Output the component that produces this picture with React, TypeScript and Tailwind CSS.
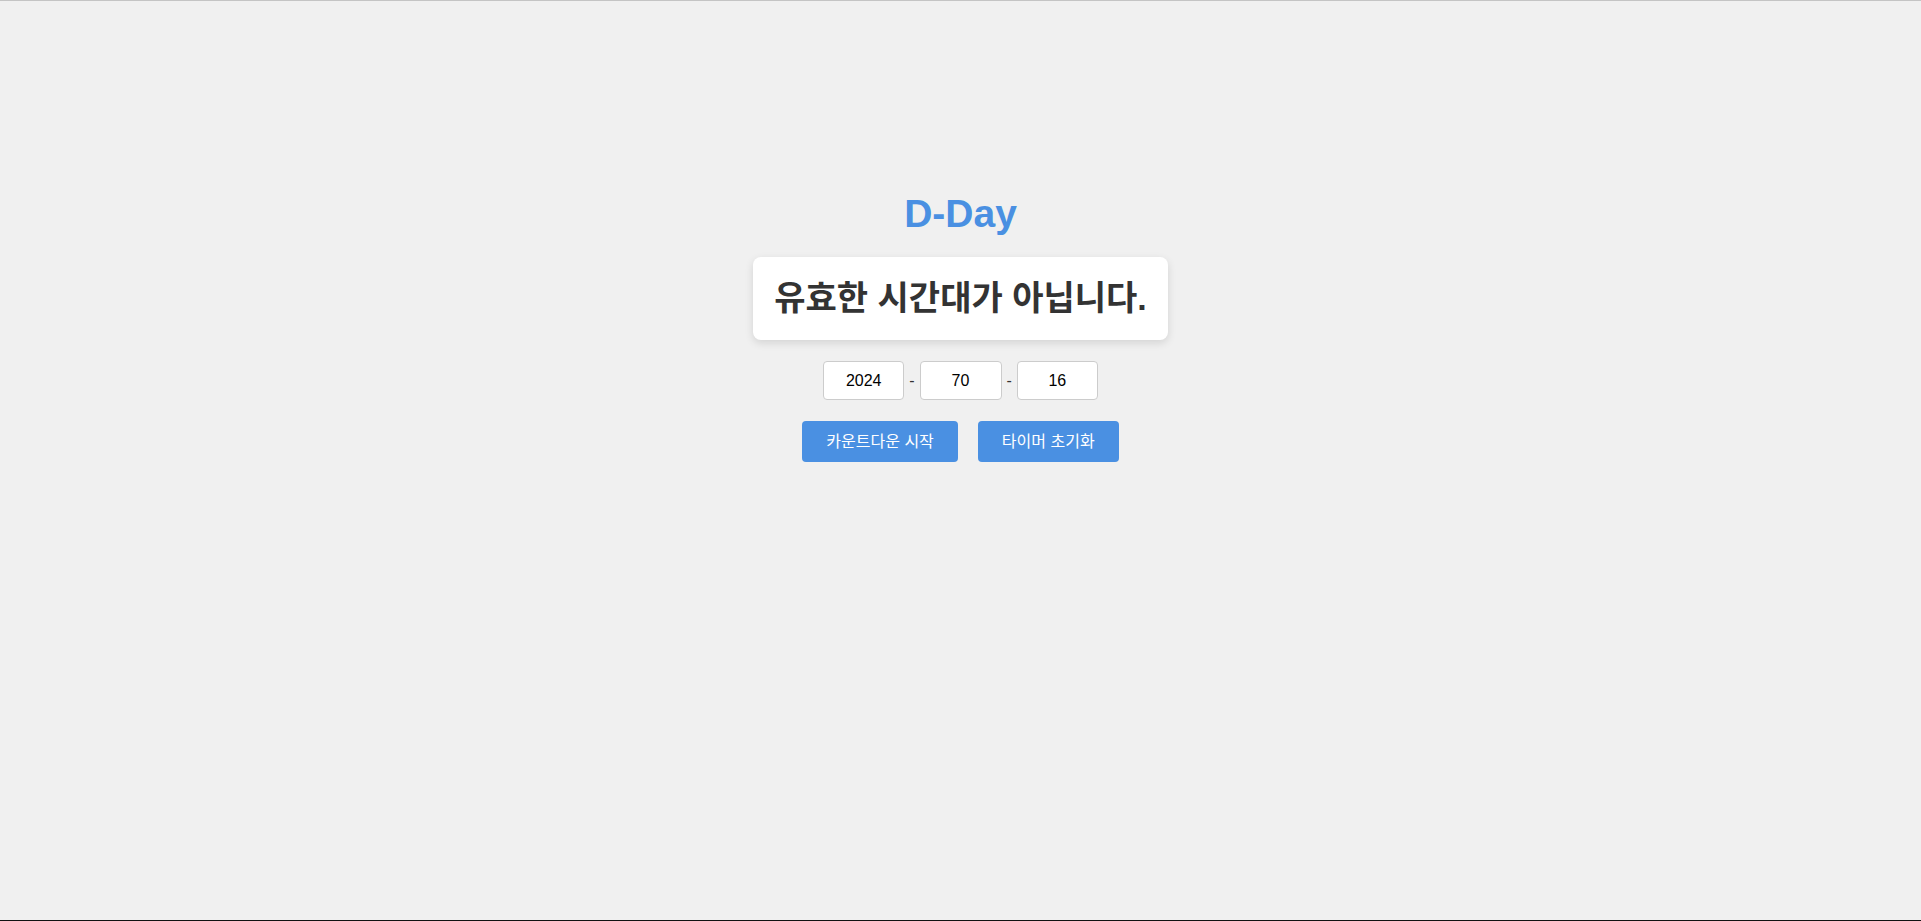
import React, { useState } from 'react';

const FONT = "font-['Liberation_Sans','Noto_Sans_CJK_KR',sans-serif]";

export default function App() {
  const [year, setYear] = useState('2024');
  const [month, setMonth] = useState('70');
  const [day, setDay] = useState('16');

  return (
    <div className={`h-[921px] box-border bg-[#f0f0f0] border-t border-t-[#c4c4c4] border-b border-b-[#111] flex flex-col items-center pt-[194px] ${FONT}`}>
      {/* title */}
      <h1 className="text-[39px] leading-[38px] font-bold text-[#4a90e2]">D-Day</h1>

      {/* message card */}
      <div className="mt-[24px] h-[83px] px-[21px] flex items-center bg-white rounded-lg shadow-[0_3px_8px_rgba(0,0,0,0.12)]">
        <span className="text-[34px] font-bold text-[#333]">유효한 시간대가 아닙니다.</span>
      </div>

      {/* date inputs */}
      <div className="mt-[21px] flex items-center text-[16px] text-black">
        <input
          value={year}
          onChange={e => setYear(e.target.value)}
          className="w-[81px] h-[39px] bg-white border border-[#ccc] rounded text-center outline-none"
        />
        <span className="mx-[5px] text-[#333]">-</span>
        <input
          value={month}
          onChange={e => setMonth(e.target.value)}
          className="w-[82px] h-[39px] bg-white border border-[#ccc] rounded text-center outline-none"
        />
        <span className="mx-[5px] text-[#333]">-</span>
        <input
          value={day}
          onChange={e => setDay(e.target.value)}
          className="w-[81px] h-[39px] bg-white border border-[#ccc] rounded text-center outline-none"
        />
      </div>

      {/* actions */}
      <div className="mt-[21px] flex gap-5">
        <button className="h-[41px] px-6 bg-[#4a90e2] text-white text-[16px] rounded hover:bg-[#357abd] transition-colors">
          카운트다운 시작
        </button>
        <button className="h-[41px] px-6 bg-[#4a90e2] text-white text-[16px] rounded hover:bg-[#357abd] transition-colors">
          타이머 초기화
        </button>
      </div>
    </div>
  );
}
